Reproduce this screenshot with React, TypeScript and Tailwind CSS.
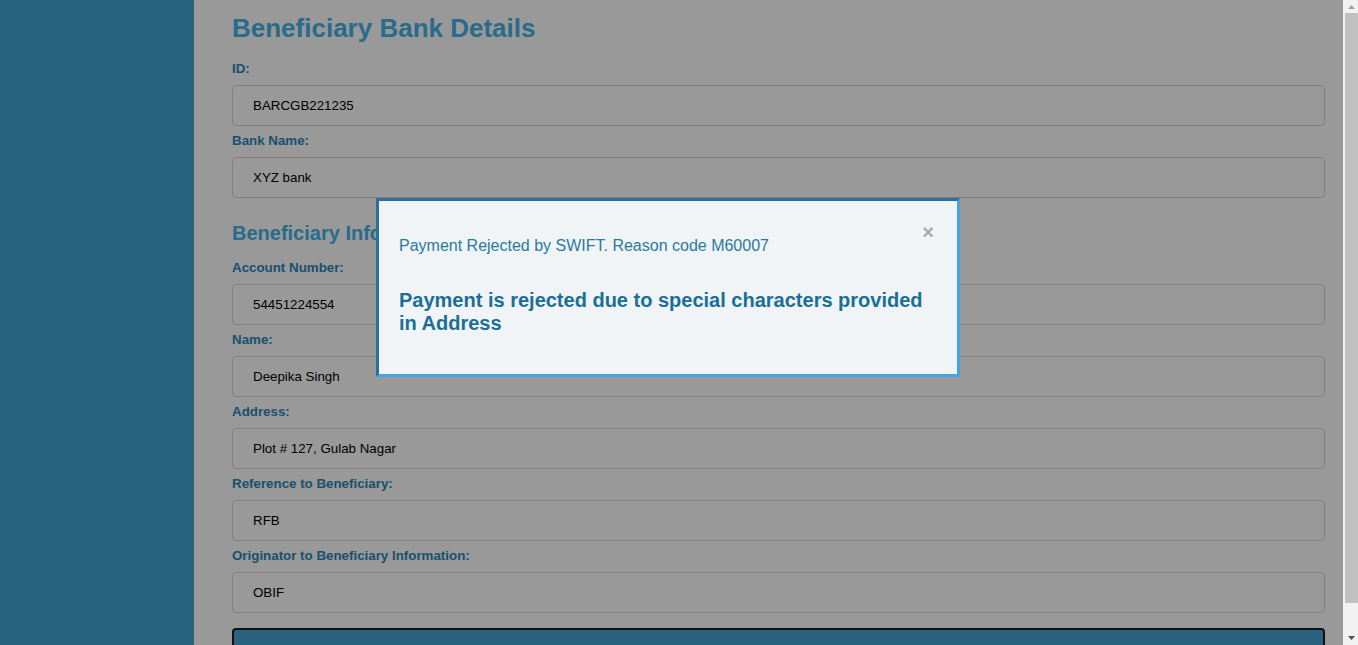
import React from "react";

const fields = [
  { label: "Account Number:", value: "54451224554" },
  { label: "Name:", value: "Deepika Singh" },
  { label: "Address:", value: "Plot # 127, Gulab Nagar" },
  { label: "Reference to Beneficiary:", value: "RFB" },
  { label: "Originator to Beneficiary Information:", value: "OBIF" },
];

function Field({ label, value }: { label: string; value: string }) {
  return (
    <div className="mb-[7px]">
      <label className="block text-[13.33px] font-bold leading-[16px] text-[#2e86b8]">{label}</label>
      <input
        readOnly
        value={value}
        className="mt-2 block h-[41px] w-full rounded-[4px] border border-[#d5d5d5] bg-white px-[20px] text-[13.33px] text-black outline-none"
      />
    </div>
  );
}

// drawn page scrollbar (the browser hides the real one)
function Scrollbar() {
  return (
    <div className="flex h-screen w-[15px] shrink-0 flex-col bg-[#f1f1f1]">
      <div className="flex h-[13px] items-center justify-center pl-[2px]">
        <svg width="7" height="4" viewBox="0 0 7 4"><path d="M3.5 0L7 4H0z" fill="#a3a3a3" /></svg>
      </div>
      <div className="ml-[2px] h-[590px] bg-[#c1c1c1]" />
      <div className="flex-1" />
      <div className="flex h-[15px] items-center justify-center pl-[2px]">
        <svg width="7" height="4" viewBox="0 0 7 4"><path d="M0 0H7L3.5 4z" fill="#505050" /></svg>
      </div>
    </div>
  );
}

export default function App() {
  return (
    <div className="flex h-screen font-['Liberation_Sans',Arial,sans-serif]">
      <div className="relative h-full flex-1">
        <div className="h-full overflow-hidden">
          <div className="flex min-h-full">
            <aside className="w-[194px] shrink-0 bg-[#46a5d5]" />

            <main className="flex-1 bg-white pl-[38px] pr-[18px] pt-[13px]">
              <h1 className="mb-[18px] text-[26px] font-bold leading-[30px] text-[#45b2e8]">Beneficiary Bank Details</h1>
              <Field label="ID:" value="BARCGB221235" />
              <Field label="Bank Name:" value="XYZ bank" />

              <h2 className="mb-[15px] mt-[24px] text-[20px] font-bold leading-[23px] text-[#45b2e8]">Beneficiary Information</h2>
              {fields.map((f) => (
                <Field key={f.label} label={f.label} value={f.value} />
              ))}

              <button
                aria-label="Submit"
                className="mb-1 mt-[15px] block h-[40px] w-full rounded-[4px] border-2 border-[#1c1c1c] bg-[#46a5d5]"
              />
            </main>
          </div>
        </div>

        <div className="absolute inset-0 flex items-start justify-center bg-black/40 pr-[7px] pt-[198px]">
          <div className="relative w-[584px] border-[3px] border-b-[#46a3e0] border-l-[#2b6f9c] border-r-[#46a3e0] border-t-[#2b6f9c] bg-[#f0f4f7] px-[20px] pb-[39px] pt-[36px]">
            <button className="absolute right-[23px] top-[20px] text-[20px] font-bold leading-[23px] text-[#aaaaaa]">×</button>
            <p className="mb-[34px] text-[16px] leading-[18px] text-[#2a7aa0]">
              Payment Rejected by SWIFT. Reason code M60007
            </p>
            <h3 className="pr-[10px] text-[20px] font-bold leading-[23px] text-[#1a6f96]">
              Payment is rejected due to special characters provided in Address
            </h3>
          </div>
        </div>
      </div>

      <Scrollbar />
    </div>
  );
}
